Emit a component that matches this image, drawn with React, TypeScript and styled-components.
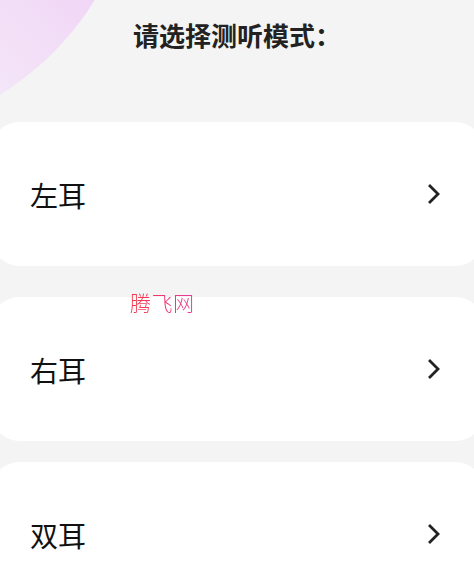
import React from 'react';
import styled, { createGlobalStyle } from 'styled-components';

const GlobalStyle = createGlobalStyle`
  html, body {
    margin: 0;
    padding: 0;
    background: #f4f4f4;
  }
  body {
    font-family: "Noto Sans CJK SC", "Noto Sans", sans-serif;
  }
`;

const Page = styled.div`
  position: relative;
  width: 474px;
  height: 575px;
  overflow: hidden;
  background: #f4f4f4;
`;

const Blob = styled.div`
  position: absolute;
  left: -437px;
  top: -437px;
  width: 574px;
  height: 574px;
  border-radius: 50%;
  background: linear-gradient(45deg, #f5e9f8 38%, #f0d3f6 62%);
`;

const Title = styled.h1`
  position: relative;
  margin: 0;
  padding-top: 18px;
  font-size: 26px;
  line-height: 34px;
  font-weight: 700;
  color: #222;
  text-align: center;
`;

const List = styled.div`
  position: relative;
  display: flex;
  flex-direction: column;
  margin: 70px -11px 0 -10px;
`;

const Card = styled.div<{ $spaceAbove: number }>`
  display: flex;
  align-items: center;
  justify-content: space-between;
  height: 144px;
  margin-top: ${(p) => p.$spaceAbove}px;
  padding: 0 44px 0 40px;
  background: #fff;
  border-radius: 30px;
  cursor: pointer;
`;

const Label = styled.span`
  font-size: 28px;
  line-height: 1;
  color: #111;
  padding-top: 2px;
`;

const Watermark = styled.div`
  position: absolute;
  left: 130px;
  top: 287px;
  font-size: 21px;
  font-weight: 300;
  letter-spacing: 0.5px;
  background: linear-gradient(90deg, #f23a48, #f0386e 50%, #e43c9c);
  -webkit-background-clip: text;
  background-clip: text;
  color: transparent;
  pointer-events: none;
`;

function Chevron() {
  return (
    <svg width="14" height="20" viewBox="0 0 14 20" fill="none">
      <path d="M3 2 L11 10 L3 18" stroke="#222" strokeWidth="2.8" strokeLinecap="square" strokeLinejoin="miter" />
    </svg>
  );
}

const modes = [
  { name: '左耳', space: 0 },
  { name: '右耳', space: 31 },
  { name: '双耳', space: 21 },
];

export default function App() {
  return (
    <>
      <GlobalStyle />
      <Page>
        <Blob />
        <Title>请选择测听模式：</Title>
        <List>
          {modes.map((m) => (
            <Card key={m.name} $spaceAbove={m.space}>
              <Label>{m.name}</Label>
              <Chevron />
            </Card>
          ))}
        </List>
        <Watermark>腾飞网</Watermark>
      </Page>
    </>
  );
}
